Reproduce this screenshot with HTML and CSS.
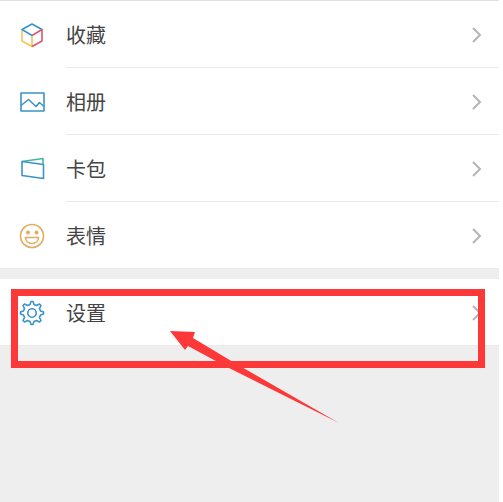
FILE: index.html
```html
<!DOCTYPE html>
<html lang="zh-CN">
<head>
    <meta charset="UTF-8">
    <meta name="viewport" content="width=device-width, initial-scale=1.0">
    <title>我</title>
    <link rel="stylesheet" href="styles.css">
</head>
<body>
    <main class="page">
        <nav class="menu">
            <a class="menu-item" href="#favorites">
                <svg class="icon" viewBox="0 0 26 26">
                    <path d="M3 7.500V19L13 24.500V13.500" stroke="#f3c55a"/>
                    <path d="M13 13.500L23 7.500V19L13 24.500" stroke="#e0566b"/>
                    <path d="M13 13.500L3 7.500L13 2L23 7.500" stroke="#3b95c9"/>
                </svg>
                <span class="label">收藏</span>
                <svg class="chevron" viewBox="0 0 10 16"><path d="M1 1L8 8L1 15"/></svg>
            </a>
            <a class="menu-item" href="#album">
                <svg class="icon" viewBox="0 0 26 26" stroke="#3b93c8">
                    <rect x="2" y="4" width="23" height="18"/>
                    <path d="M2 16.500L9.500 10.500L17 17.500L20.500 13.500L25 17.500"/>
                </svg>
                <span class="label">相册</span>
                <svg class="chevron" viewBox="0 0 10 16"><path d="M1 1L8 8L1 15"/></svg>
            </a>
            <a class="menu-item" href="#cards">
                <svg class="icon" viewBox="0 0 26 26">
                    <path d="M3 5.500L24 2.500V8.500" stroke="#3fb999"/>
                    <path d="M3 5.500L24.500 8.500V22.500L3 19.500Z" stroke="#3b93c8"/>
                </svg>
                <span class="label">卡包</span>
                <svg class="chevron" viewBox="0 0 10 16"><path d="M1 1L8 8L1 15"/></svg>
            </a>
            <a class="menu-item" href="#stickers">
                <svg class="icon" viewBox="0 0 26 26" stroke="#e3ac5d">
                    <circle cx="13" cy="13" r="11.500"/>
                    <circle class="eye" cx="9" cy="9.500" r="2"/>
                    <circle class="eye" cx="17.500" cy="9.500" r="2"/>
                    <path d="M6.500 14.500H19.500C19.500 18.500 16.500 20.500 13 20.500S6.500 18.500 6.500 14.500Z"/>
                </svg>
                <span class="label">表情</span>
                <svg class="chevron" viewBox="0 0 10 16"><path d="M1 1L8 8L1 15"/></svg>
            </a>
        </nav>

        <nav class="menu">
            <a class="menu-item" href="#settings">
                <svg class="icon" viewBox="0 0 26 26" stroke="#3b93c8">
                    <path d="M11 4.500L12 1.500H14L15 4.500L17.500 5.500L20.500 4L22 5.500L20.500 8.500L21.500 11L24.500 12V14L21.500 15L20.500 17.500L22 20.500L20.500 22L17.500 20.500L15 21.500L14 24.500H12L11 21.500L8.500 20.500L5.500 22L4 20.500L5.500 17.500L4.500 15L1.500 14V12L4.500 11L5.500 8.500L4 5.500L5.500 4L8.500 5.500Z"/>
                    <circle cx="13" cy="13" r="4.200"/>
                </svg>
                <span class="label">设置</span>
                <svg class="chevron" viewBox="0 0 10 16"><path d="M1 1L8 8L1 15"/></svg>
            </a>
            <!-- Highlight around the settings row -->
            <div class="highlight"></div>
            <svg class="arrow" viewBox="0 0 170 94">
                <path d="M0 1L25 2L23 8L63 32L169 93L57 37L18 16L15 20Z"/>
            </svg>
        </nav>
    </main>
</body>
</html>
```
FILE: styles.css
```css
* {
    box-sizing: border-box;
}
body {
    margin: 0;
    background-color: #fff;
    font-family: "Noto Sans CJK SC", sans-serif;
}
.page {
    min-height: 100vh;
    margin-right: 4px;
    border-top: 1px solid #e0e0e0;
    background-color: #eee;
}
.menu {
    position: relative;
    margin-bottom: 10px;
    background-color: #fff;
}
.menu-item {
    display: flex;
    align-items: center;
    height: 67px;
    padding: 0 17px 0 19px;
    color: #444;
    text-decoration: none;
    /* divider starts under the label, not under the icon */
    background: linear-gradient(#ebebeb, #ebebeb) 66px 100% / 100% 1px no-repeat;
}
.menu-item:last-of-type {
    background-position: 0 100%;
}
.icon {
    width: 26px;
    height: 26px;
    margin-right: 21px;
    fill: none;
    stroke-width: 1.6;
    stroke-linejoin: round;
}
.eye {
    fill: #e3ac5d;
    stroke: none;
}
.label {
    flex: 1;
    font-size: 20px;
    line-height: 30px;
}
.chevron {
    width: 10px;
    height: 16px;
    fill: none;
    stroke: #b5b5b5;
    stroke-width: 2;
}
.highlight {
    position: absolute;
    top: 10px;
    left: 11px;
    right: 14px;
    height: 79px;
    border: 7px solid #fd3838;
}
.arrow {
    position: absolute;
    top: 51px;
    left: 170px;
    width: 170px;
    height: 94px;
    fill: #fd3838;
}
```
